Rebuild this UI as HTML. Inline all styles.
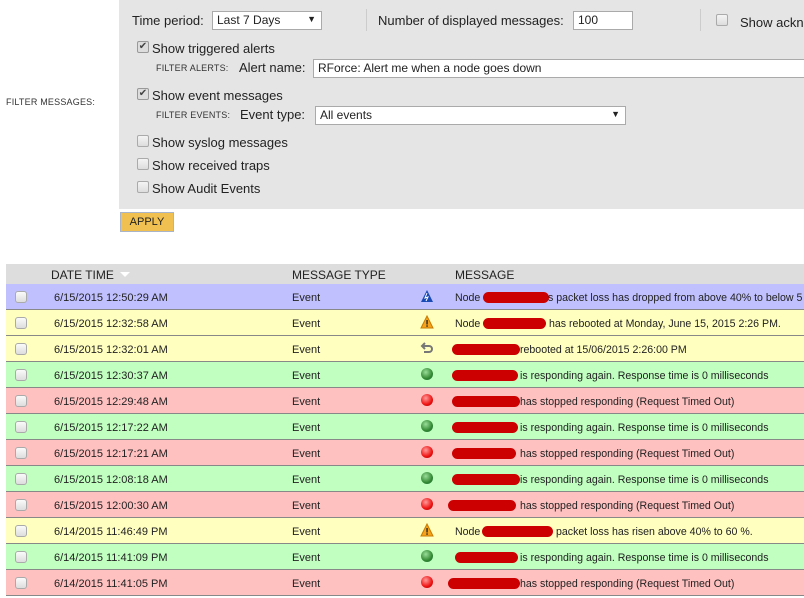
<!DOCTYPE html>
<html><head><meta charset="utf-8"><style>
*{margin:0;padding:0;box-sizing:border-box}
body{width:804px;height:598px;overflow:hidden;background:#fff;font-family:"Liberation Sans",Arial,sans-serif;color:#222;position:relative}
.a{position:absolute;white-space:nowrap}
.panel{position:absolute;left:119px;top:0;width:685px;height:209px;background:#e5e5e5}
.f13{font-size:13px;color:#222}
.sm{font-size:9px;color:#333;letter-spacing:.2px}
.inp{position:absolute;background:#fff;border:1px solid #aaa;font-size:12px;padding:1px 4px;color:#222;height:19px}
.cb{position:absolute;width:12px;height:12px;border:1px solid #aaa;border-radius:2px;background:linear-gradient(#f4f4f4,#ddd)}
.cbk{position:absolute;width:12px;height:12px;border:1px solid #999;border-radius:2px;background:#ddd;font-size:10px;line-height:10px;text-align:center;color:#444}
.row{position:absolute;left:6px;width:798px;height:26px;border-bottom:1px solid #888;font-size:11px;color:#222}
.row .c{position:absolute;left:9px;top:7px;width:12px;height:12px;border:1px solid #aaa;border-radius:3px;background:linear-gradient(#fafafa,#ddd)}
.row span{position:absolute;top:8px;white-space:nowrap}
.row span.m{font-size:10.6px}
.blob{position:absolute;top:8px;height:11px;background:#c00;border-radius:6px}
.g,.r{position:absolute;left:415px;top:6px;width:12px;height:12px;border-radius:50%}
.g{background:radial-gradient(circle at 40% 35%,#9d9,#383 60%,#163)}
.r{background:radial-gradient(circle at 40% 35%,#f99,#e11 60%,#900)}
</style></head><body>
<div class="a sm" style="left:6px;top:97px">FILTER MESSAGES:</div>
<div class="panel"></div>
<div class="a f13" style="left:132px;top:13px">Time period:</div>
<div class="inp" style="left:212px;top:11px;width:110px">Last 7 Days<span style="position:absolute;right:5px;top:2px;font-size:9px">▼</span></div>
<div class="a" style="left:366px;top:9px;width:1px;height:22px;background:#ccc"></div>
<div class="a f13" style="left:378px;top:13px">Number of displayed messages:</div>
<div class="inp" style="left:573px;top:11px;width:60px">100</div>
<div class="a" style="left:700px;top:9px;width:1px;height:22px;background:#ccc"></div>
<div class="cb" style="left:716px;top:14px"></div>
<div class="a f13" style="left:740px;top:15px">Show ackn</div>

<div class="cbk" style="left:137px;top:41px">✔</div>
<div class="a f13" style="left:152px;top:41px">Show triggered alerts</div>
<div class="a sm" style="left:156px;top:63px">FILTER ALERTS:</div>
<div class="a f13" style="left:239px;top:60px">Alert name:</div>
<div class="inp" style="left:313px;top:59px;width:500px">RForce: Alert me when a node goes down</div>

<div class="cbk" style="left:137px;top:88px">✔</div>
<div class="a f13" style="left:152px;top:88px">Show event messages</div>
<div class="a sm" style="left:156px;top:110px">FILTER EVENTS:</div>
<div class="a f13" style="left:240px;top:107px">Event type:</div>
<div class="inp" style="left:315px;top:106px;width:311px">All events<span style="position:absolute;right:5px;top:2px;font-size:9px">▼</span></div>

<div class="cb" style="left:137px;top:135px"></div>
<div class="a f13" style="left:152px;top:135px">Show syslog messages</div>
<div class="cb" style="left:137px;top:158px"></div>
<div class="a f13" style="left:152px;top:158px">Show received traps</div>
<div class="cb" style="left:137px;top:181px"></div>
<div class="a f13" style="left:152px;top:181px">Show Audit Events</div>

<div class="a" style="left:120px;top:212px;width:54px;height:20px;background:#f0c050;border:1px solid #a9b4c8;font-size:11px;line-height:18px;text-align:center;color:#222">APPLY</div>

<div class="a" style="left:6px;top:264px;width:798px;height:20px;background:#ddd;font-size:12px;color:#222">
<span class="a" style="left:45px;top:4px">DATE TIME</span>
<span class="a" style="left:114px;top:8px;width:0;height:0;border-left:5px solid transparent;border-right:5px solid transparent;border-top:5px solid #fff"></span>
<span class="a" style="left:286px;top:4px">MESSAGE TYPE</span>
<span class="a" style="left:449px;top:4px">MESSAGE</span>
</div>

<div class="row" style="top:284px;background:#c0c0ff"><div class="c"></div><span style="left:48px">6/15/2015 12:50:29 AM</span><span style="left:286px">Event</span>
<svg style="position:absolute;left:414px;top:5px" width="14" height="14"><polygon points="7,1 13,13 1,13" fill="#1a4ab5"/><path d="M7,4 L5,9 L8,8 L6,12" stroke="#fff" fill="none" stroke-width="1"/></svg>
<span class="m" style="left:449px">Node</span><div class="blob" style="left:477px;width:66px"></div><span class="m" style="left:542px">s packet loss has dropped from above 40% to below 5</span></div>

<div class="row" style="top:310px;background:#ffffc0"><div class="c"></div><span style="left:48px">6/15/2015 12:32:58 AM</span><span style="left:286px">Event</span>
<svg style="position:absolute;left:414px;top:5px" width="14" height="14"><polygon points="7,1 13,13 1,13" fill="#f7a21b" stroke="#c77a00"/><rect x="6.3" y="5" width="1.5" height="4.5" fill="#333"/><rect x="6.3" y="10.3" width="1.5" height="1.5" fill="#333"/></svg>
<span class="m" style="left:449px">Node</span><div class="blob" style="left:477px;width:63px"></div><span class="m" style="left:543px">has rebooted at Monday, June 15, 2015 2:26 PM.</span></div>

<div class="row" style="top:336px;background:#ffffc0"><div class="c"></div><span style="left:48px">6/15/2015 12:32:01 AM</span><span style="left:286px">Event</span>
<svg style="position:absolute;left:414px;top:5px" width="14" height="14"><path d="M5,2 L2,5 L5,8 M2,5 H9 A3,3 0 0 1 9,11 H4" stroke="#777" stroke-width="2" fill="none"/></svg>
<div class="blob" style="left:446px;width:68px"></div><span class="m" style="left:514px">rebooted at 15/06/2015 2:26:00 PM</span></div>

<div class="row" style="top:362px;background:#c0ffc0"><div class="c"></div><span style="left:48px">6/15/2015 12:30:37 AM</span><span style="left:286px">Event</span><div class="g"></div>
<div class="blob" style="left:446px;width:66px"></div><span class="m" style="left:514px">is responding again. Response time is 0 milliseconds</span></div>

<div class="row" style="top:388px;background:#ffc0c0"><div class="c"></div><span style="left:48px">6/15/2015 12:29:48 AM</span><span style="left:286px">Event</span><div class="r"></div>
<div class="blob" style="left:446px;width:68px"></div><span class="m" style="left:514px">has stopped responding (Request Timed Out)</span></div>

<div class="row" style="top:414px;background:#c0ffc0"><div class="c"></div><span style="left:48px">6/15/2015 12:17:22 AM</span><span style="left:286px">Event</span><div class="g"></div>
<div class="blob" style="left:446px;width:66px"></div><span class="m" style="left:514px">is responding again. Response time is 0 milliseconds</span></div>

<div class="row" style="top:440px;background:#ffc0c0"><div class="c"></div><span style="left:48px">6/15/2015 12:17:21 AM</span><span style="left:286px">Event</span><div class="r"></div>
<div class="blob" style="left:446px;width:64px"></div><span class="m" style="left:514px">has stopped responding (Request Timed Out)</span></div>

<div class="row" style="top:466px;background:#c0ffc0"><div class="c"></div><span style="left:48px">6/15/2015 12:08:18 AM</span><span style="left:286px">Event</span><div class="g"></div>
<div class="blob" style="left:446px;width:68px"></div><span class="m" style="left:514px">is responding again. Response time is 0 milliseconds</span></div>

<div class="row" style="top:492px;background:#ffc0c0"><div class="c"></div><span style="left:48px">6/15/2015 12:00:30 AM</span><span style="left:286px">Event</span><div class="r"></div>
<div class="blob" style="left:442px;width:68px"></div><span class="m" style="left:514px">has stopped responding (Request Timed Out)</span></div>

<div class="row" style="top:518px;background:#ffffc0"><div class="c"></div><span style="left:48px">6/14/2015 11:46:49 PM</span><span style="left:286px">Event</span>
<svg style="position:absolute;left:414px;top:5px" width="14" height="14"><polygon points="7,1 13,13 1,13" fill="#f7a21b" stroke="#c77a00"/><rect x="6.3" y="5" width="1.5" height="4.5" fill="#333"/><rect x="6.3" y="10.3" width="1.5" height="1.5" fill="#333"/></svg>
<span class="m" style="left:449px">Node</span><div class="blob" style="left:476px;width:71px"></div><span class="m" style="left:550px">packet loss has risen above 40% to 60 %.</span></div>

<div class="row" style="top:544px;background:#c0ffc0"><div class="c"></div><span style="left:48px">6/14/2015 11:41:09 PM</span><span style="left:286px">Event</span><div class="g"></div>
<div class="blob" style="left:449px;width:63px"></div><span class="m" style="left:514px">is responding again. Response time is 0 milliseconds</span></div>

<div class="row" style="top:570px;background:#ffc0c0"><div class="c"></div><span style="left:48px">6/14/2015 11:41:05 PM</span><span style="left:286px">Event</span><div class="r"></div>
<div class="blob" style="left:442px;width:72px"></div><span class="m" style="left:514px">has stopped responding (Request Timed Out)</span></div>
</body></html>
